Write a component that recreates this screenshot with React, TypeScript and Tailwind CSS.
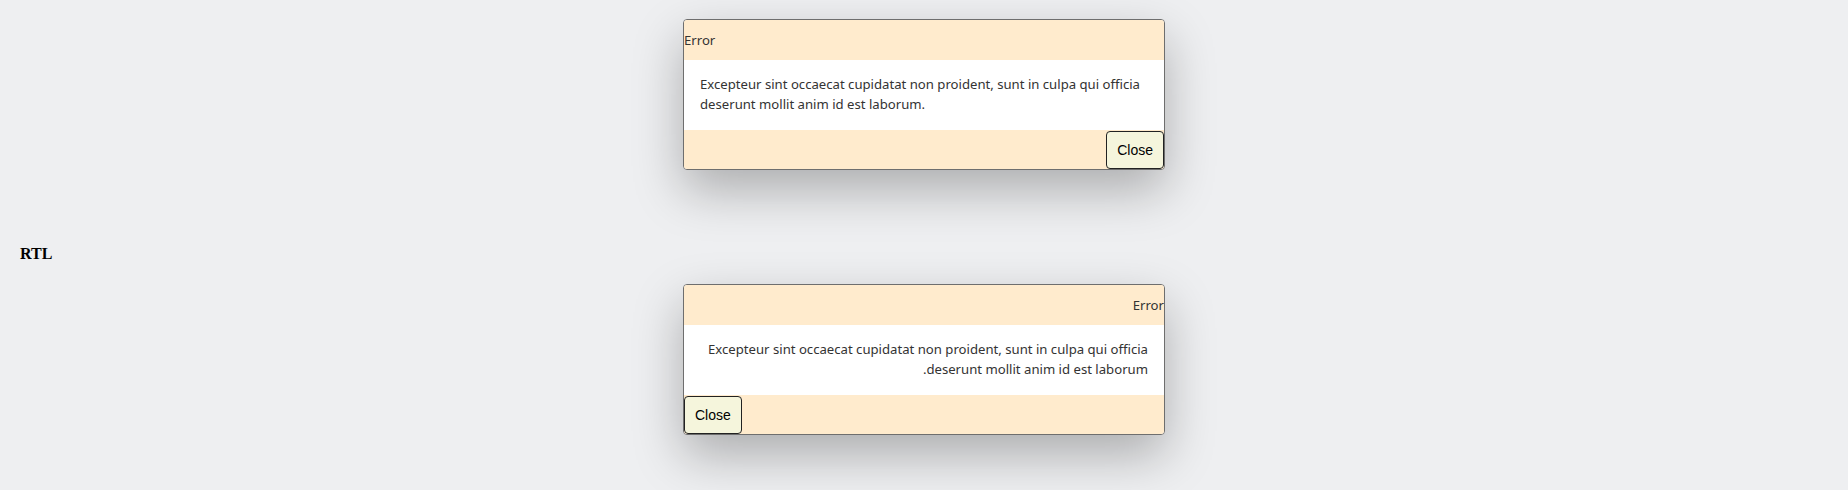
import React from "react";

const text =
  "Excepteur sint occaecat cupidatat non proident, sunt in culpa qui officia deserunt mollit anim id est laborum.";

function Dialog({ rtl }: { rtl?: boolean }) {
  return (
    <div
      dir={rtl ? "rtl" : "ltr"}
      className="w-[482px] border border-[#6e6e6e] rounded-[4px] overflow-hidden bg-white shadow-[0_20px_50px_rgba(0,0,0,0.28)]"
    >
      <div className="h-[40px] pt-[2px] bg-[#ffebcd] flex items-center text-[13.15px] text-[#333] [font-family:'Noto_Sans',sans-serif]">
        Error
      </div>
      <div className="bg-white pt-[14px] pb-[16px] px-4 text-[13.15px] leading-5 text-[#333] [font-family:'Noto_Sans',sans-serif]">
        {text}
      </div>
      <div className="h-[39px] bg-[#ffebcd] flex items-end justify-start">
        <button className="h-[38px] px-[10px] bg-[#f5f5dc] border border-[#222] rounded-[4px] text-[14px] leading-4 text-black [font-family:'Liberation_Sans',Arial,sans-serif] ms-auto">
          Close
        </button>
      </div>
    </div>
  );
}

export default function App() {
  return (
    <div className="min-h-[490px] bg-[#eeeff1] flex flex-col pt-[19px]">
      <div className="flex justify-center">
        <Dialog />
      </div>
      <div className="mt-[75px] pl-5 h-[18px] leading-[18px] text-[16px] font-bold text-black [font-family:'Liberation_Serif','Times_New_Roman',serif]">
        RTL
      </div>
      <div className="mt-[21px] flex justify-center">
        <Dialog rtl />
      </div>
    </div>
  );
}
